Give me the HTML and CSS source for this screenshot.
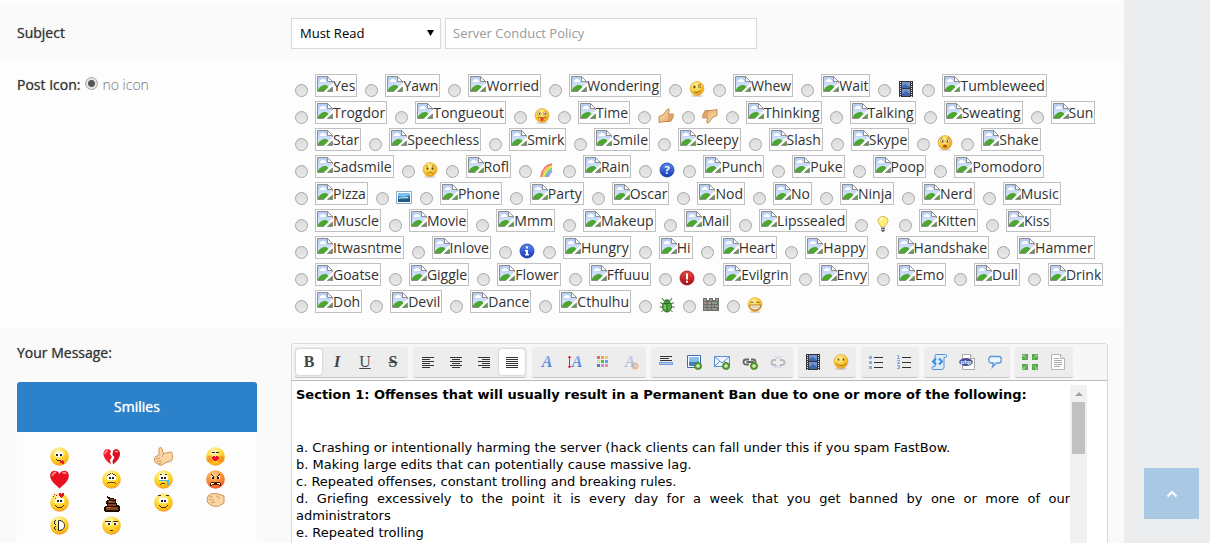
FILE: index.html
```
<!doctype html>
<html lang="en">
    <head>
        <meta charset="UTF-8" />
        <meta name="viewport" content="width=device-width, initial-scale=1.0" />
        <title>Edit Post</title>
        <link rel="stylesheet" href="styles.css">
    </head>
    <body>
        <!-- Shared icon symbols -->
        <svg class="sprite" width="0" height="0" aria-hidden="true">
            <defs>
                <radialGradient id="gFace" cx="40%" cy="30%" r="70%">
                    <stop offset="0" stop-color="#fff2a0" />
                    <stop offset=".55" stop-color="#fcd03c" />
                    <stop offset="1" stop-color="#e8a01e" />
                </radialGradient>
                <radialGradient id="gSmile" cx="42%" cy="25%" r="75%">
                    <stop offset="0" stop-color="#fff8c4" />
                    <stop offset=".5" stop-color="#ffdc3a" />
                    <stop offset=".85" stop-color="#fcb813" />
                    <stop offset="1" stop-color="#f59a3c" />
                </radialGradient>
                <radialGradient id="gAngry" cx="42%" cy="25%" r="75%">
                    <stop offset="0" stop-color="#ffd08a" />
                    <stop offset=".6" stop-color="#fb8a35" />
                    <stop offset="1" stop-color="#ee5a2a" />
                </radialGradient>
                <linearGradient id="gSky" x1="0" y1="0" x2="0" y2="1">
                    <stop offset="0" stop-color="#b3ccf5" />
                    <stop offset="1" stop-color="#e4edfc" />
                </linearGradient>
                <linearGradient id="gBlue" x1="0" y1="0" x2="0" y2="1">
                    <stop offset="0" stop-color="#5a8af0" />
                    <stop offset="1" stop-color="#1638b4" />
                </linearGradient>
                <linearGradient id="gRed" x1="0" y1="0" x2="0" y2="1">
                    <stop offset="0" stop-color="#ee4a45" />
                    <stop offset="1" stop-color="#a80c12" />
                </linearGradient>
                <linearGradient id="gLetter" x1="0" y1="0" x2="0" y2="1">
                    <stop offset="0" stop-color="#9dbdf0" />
                    <stop offset="1" stop-color="#3f74cf" />
                </linearGradient>
                <linearGradient id="gHand" x1="0" y1="0" x2="1" y2="1">
                    <stop offset="0" stop-color="#ffe3b8" />
                    <stop offset="1" stop-color="#e2a263" />
                </linearGradient>
            </defs>

            <symbol id="missing" viewBox="0 0 16 16">
                <path d="M.5.5h10l5 5v10H.5z" fill="url(#gSky)" stroke="#8e8e8e" />
                <path d="M10.500.500v5h5z" fill="#fff" stroke="#8e8e8e" />
                <path d="M3 6h5.500a1.500 1.500 0 0 0-1-2.500A2 2 0 0 0 4 4a1.200 1.200 0 0 0-1 2z" fill="#fff" />
                <path d="M1 15v-1.500C3 10 6 8.500 9 9c1.500.500 2.500 1.500 3 3v3z" fill="#4da62f" />
                <path d="M16 6.500L6.500 16H10l6-5z" fill="#fdfdfd" />
                <path d="M10.500 15.500h5V11z" fill="#4da62f" stroke="#8e8e8e" />
            </symbol>

            <symbol id="face" viewBox="0 0 16 16">
                <ellipse cx="8" cy="15" rx="6" ry="1" fill="#000" opacity=".15" />
                <circle cx="8" cy="7.500" r="7" fill="url(#gFace)" stroke="#dfa038" stroke-width=".6" />
            </symbol>
            <symbol id="wink" viewBox="0 0 16 16">
                <use href="#face" />
                <ellipse cx="5.500" cy="6" rx="1" ry="1.400" fill="#5a3a10" />
                <path d="M9 6.500c1-.800 2-.800 3 0M9 4.500l3-1M5 10.500c2 1.500 4.500 1.200 6.500-1" fill="none" stroke="#7b5218" stroke-width=".9" />
            </symbol>
            <symbol id="tongue" viewBox="0 0 16 16">
                <use href="#face" />
                <circle cx="5.200" cy="5.500" r="1.600" fill="#fff" stroke="#9a6a20" stroke-width=".6" />
                <circle cx="10.800" cy="5.500" r="1.600" fill="#fff" stroke="#9a6a20" stroke-width=".6" />
                <path d="M5 5h1v1.500H5zM10.500 5h1v1.500h-1z" fill="#402808" />
                <path d="M3.500 9.500h9" stroke="#8a5a18" stroke-width=".8" />
                <path d="M6.500 10h3v1.500a1.500 1.500 0 0 1-3 0z" fill="#e8333a" />
            </symbol>
            <symbol id="shocked" viewBox="0 0 16 16">
                <use href="#face" />
                <circle cx="5.200" cy="6" r="1.700" fill="#fff" stroke="#9a6a20" stroke-width=".6" />
                <circle cx="10.800" cy="6" r="1.700" fill="#fff" stroke="#9a6a20" stroke-width=".6" />
                <path d="M5 5.500h1V7H5zM10 5.500h1V7h-1z" fill="#402808" />
                <path d="M3 3.500l2.500-1M13 3.500l-2.500-1" stroke="#a8762a" stroke-width=".8" />
                <ellipse cx="8" cy="11" rx="2.200" ry="1.500" fill="#9a5a18" />
            </symbol>
            <symbol id="sad" viewBox="0 0 16 16">
                <use href="#face" />
                <ellipse cx="5.500" cy="6.500" rx=".9" ry="1.300" fill="#5a3a10" />
                <ellipse cx="10.500" cy="6.500" rx=".9" ry="1.300" fill="#5a3a10" />
                <path d="M3.500 4.500L6 3.500M12.500 4.500L10 3.500M5 11.500c1.500-1.800 4.500-1.800 6 0" fill="none" stroke="#9a6a20" stroke-width=".8" />
            </symbol>
            <symbol id="biggrin" viewBox="0 0 16 16">
                <use href="#face" />
                <path d="M3.500 6c.800-1.500 2-1.500 3 0M9.500 6c.800-1.500 2-1.500 3 0" fill="none" stroke="#6b4512" />
                <path d="M2.500 8h11c0 3-2.500 5-5.500 5s-5.500-2-5.500-5z" fill="#fff" stroke="#9a6416" stroke-width=".8" />
                <path d="M3 10h10M6 8.500V12M8 8.500v4M10 8.500V12" stroke="#c9a060" stroke-width=".5" />
            </symbol>
            <symbol id="happy" viewBox="0 0 16 16">
                <use href="#face" />
                <ellipse cx="5.500" cy="5.500" rx=".8" ry="1.300" fill="#6b4512" />
                <ellipse cx="10.500" cy="5.500" rx=".8" ry="1.300" fill="#6b4512" />
                <path d="M3.500 9c1.500 3.500 7.500 3.500 9 0" fill="none" stroke="#9a6a20" stroke-width=".9" />
            </symbol>
            <symbol id="thumbsup" viewBox="0 0 16 16">
                <path d="M1 8.500l5-2.500 3.500-5c1-.700 2 .300 1.700 1.500L10 6h4.500c1.500 0 1.300 2 .300 2 .700.500.500 1.800-.500 2 .500.700 0 1.700-1 1.800.300 1-.300 1.700-1.300 1.700H7l-6 1z" fill="url(#gHand)" stroke="#b87333" stroke-width=".8" />
                <path d="M10 8h4M10 10h4M9.500 12H13" stroke="#c4823f" stroke-width=".6" />
            </symbol>
            <symbol id="thumbsdown" viewBox="0 0 16 16">
                <g transform="rotate(180 8 8)"><use href="#thumbsup" /></g>
            </symbol>
            <symbol id="video" viewBox="0 0 16 16">
                <path d="M1 0h14v16H1z" fill="#333" />
                <path d="M4 1h8v6H4zM4 8h8v7H4z" fill="#6f92d0" />
                <path d="M4 5l3-2 5 3v1H4zM4 13l4-3 4 3v2H4z" fill="#4166ae" />
                <path d="M2.500 1v15M13.500 1v15" stroke="#eee" stroke-dasharray="1 1" />
            </symbol>
            <symbol id="rainbow" viewBox="0 0 16 16">
                <g fill="none" stroke-width="1.500">
                    <path d="M2 15C3 8 7 3 13 2" stroke="#f4645f" />
                    <path d="M3.400 15c1-6 4.500-10 9.600-11.600" stroke="#fba64b" />
                    <path d="M4.800 15c1-5 4-8.800 8.200-10.200" stroke="#f6ea55" />
                    <path d="M6.200 15c.800-4 3.300-7 6.800-8.800" stroke="#72d468" />
                    <path d="M7.600 15c.800-3 2.600-5.500 5.400-7.200" stroke="#5cb0f2" />
                    <path d="M9 15c.500-2.500 1.800-4 4-5.500" stroke="#b389e8" />
                </g>
            </symbol>
            <symbol id="question" viewBox="0 0 16 16">
                <circle cx="8" cy="8" r="7" fill="url(#gBlue)" stroke="#1c3aa5" stroke-width=".8" />
            </symbol>
            <symbol id="information" viewBox="0 0 16 16">
                <circle cx="8" cy="8" r="7" fill="url(#gBlue)" stroke="#1c3aa5" stroke-width=".8" />
                <path d="M7 3.500h2v2H7zM6 7h3v4h1v1.500H6V11h1V8.500H6z" fill="#fff" />
            </symbol>
            <symbol id="exclamation" viewBox="0 0 16 16">
                <circle cx="8" cy="8" r="7" fill="url(#gRed)" stroke="#9b0d10" stroke-width=".8" />
                <path d="M7 3.500h2v6H7zM7 10.800h2v2H7z" fill="#fff" />
            </symbol>
            <symbol id="photo" viewBox="0 0 16 16">
                <path d="M.5 2.500h15v12H.5z" fill="#fff" stroke="#8fa9c4" />
                <path d="M2 4h12v9H2z" fill="#2f7fc6" />
                <path d="M2 4h12v2l-6 2-6-1z" fill="#7fc0ee" />
                <path d="M2 10c4-2 8 1 12-1v4H2z" fill="#1d5a80" />
                <path d="M3 9.500c3-1.500 6 0 9-1" stroke="#e5f5ff" fill="none" />
            </symbol>
            <symbol id="lightbulb" viewBox="0 0 16 16">
                <path d="M8 .5c3 0 5 2 5 4.500 0 2.500-2.500 3.500-3 6H6c-.500-2.500-3-3.500-3-6C3 2.500 5 .5 8 .5z" fill="#ffee7a" stroke="#cda93a" stroke-width=".8" />
                <path d="M5 4c.500-1.200 1.500-2 3-2" stroke="#fffbd8" stroke-width="1.500" fill="none" />
                <path d="M6 11h4v4H6z" fill="#b9b9b9" />
                <path d="M6 12.500h4M6 14.500h4M7 15.500h2" stroke="#555" stroke-width=".8" />
            </symbol>
            <symbol id="bug" viewBox="0 0 16 16">
                <path d="M5 4L3 1M11 4l2-3M4 7L1 5.500M12 7l3-1.500M4 10H.5M12 10h3.500M5 12.500L2.500 15M11 12.500l2.500 2.500" stroke="#3a6a36" fill="none" />
                <ellipse cx="8" cy="9.500" rx="4.500" ry="5.500" fill="#55a83f" stroke="#2b6a25" />
                <path d="M5 4.500c0-3 6-3 6 0z" fill="#2f7d33" />
                <path d="M8 6v9M5 6.500h6" stroke="#2b6a25" />
                <path d="M6 8v4" stroke="#a6dd8b" />
            </symbol>
            <symbol id="brick" viewBox="0 0 16 16" shape-rendering="crispEdges">
                <path d="M0 1h4v2h2V1h4v2h2V1h4v13H0z" fill="#6d6d6d" />
                <path d="M1 2h2v2H1zM7 2h2v2H7zM13 2h2v2h-2zM5 5h3v2H5zM12 8h3v2h-3zM1 11h3v2H1z" fill="#9a9a9a" />
                <path d="M1 5h3v2H1zM9 8h2v2H9zM5 11h3v2H5z" fill="#a88a7c" />
                <path d="M9 5h5v2H9zM1 8h2v2H1zM4 8h4v2H4zM9 11h5v2H9z" fill="#8b978a" />
            </symbol>

            <!-- Smilies of the sidebar box -->
            <symbol id="s-base" viewBox="0 0 19 19">
                <circle cx="9.500" cy="9.500" r="9.300" fill="url(#gSmile)" />
            </symbol>
            <symbol id="s-eyes" viewBox="0 0 19 19">
                <path d="M6 5h7v1h1v4H5V6h1z" fill="#fff" />
                <path d="M7 7h2v2H7zM10 7h2v2h-2z" fill="#222" />
            </symbol>
            <symbol id="s-tongue" viewBox="0 0 19 19">
                <use href="#s-base" />
                <g shape-rendering="crispEdges">
                    <path d="M6 5h3v1h1V5h3v4h-3v1H6V9H5V6h1z" fill="#fff" />
                    <path d="M6 7h2v2H6zM10 7h2v2h-2z" fill="#222" />
                    <path d="M6 12h1v1H6zM7 13h4v1H7z" fill="#4a2a00" />
                    <path d="M10 14h4v3h-2v-1h-2zM12 13h1v1h-1z" fill="#ec1c24" />
                </g>
            </symbol>
            <symbol id="s-broken" viewBox="0 0 19 19">
                <path d="M9 4C7 1 1 2 1.500 7.500 2 12 6 15 9 17.500L8 13l2-3-2-3z" fill="#ee1c2c" />
                <path d="M11 4c2-3 7.500-2 7 3.500C17.500 12 14 15 11 17.500L10.500 14l2-4-2-2z" fill="#d81025" />
                <path d="M3 7c0-2 1-3 3-3M13 5c1-.800 2-.800 3 0" stroke="#ff9a9a" stroke-width="1.500" fill="none" />
            </symbol>
            <symbol id="s-thumb" viewBox="0 0 19 19">
                <path d="M5 8V2c0-2 3-2 3 0l1.500 4.500L17 5c1.500 0 1.500 2 1.500 4s0 4-1.500 5l-5 1.500L7 18.500l-5-2.500C0 14 0 9.500 2 9.500z" fill="#fbd6a4" stroke="#c98a4b" stroke-width=".9" />
                <path d="M2 12l4-1M3 14.500l4-1M5 17l3-2M9.500 6.500L8 10" stroke="#c98a4b" stroke-width=".8" fill="none" />
            </symbol>
            <symbol id="s-kiss" viewBox="0 0 19 19">
                <use href="#s-base" />
                <circle cx="4" cy="12" r="3.500" fill="#f77b22" opacity=".6" />
                <circle cx="15" cy="12" r="3.500" fill="#f77b22" opacity=".6" />
                <g shape-rendering="crispEdges">
                    <path d="M6 5h3v1H6zM10 5h3v1h-3z" fill="#222" />
                    <path d="M7 9h2v1h1V9h2v1h1v2h-1v1h-1v1H8v-1H7v-1H6v-2h1z" fill="#ea0f2a" />
                </g>
            </symbol>
            <symbol id="s-heart" viewBox="0 0 19 19">
                <path d="M9.500 4C7.500-.5 0-.5.200 6c.300 5.500 6 9 9.300 12.500C13 15 18.700 11.500 18.800 6 19-.5 11.500-.5 9.500 4z" fill="#e8101e" />
                <path d="M2.500 6c0-2.500 1.500-3.500 3.500-3.500M12.500 3c2-.800 3 0 3.500.8" stroke="#ff8f8f" stroke-width="1.800" fill="none" />
            </symbol>
            <symbol id="s-sad" viewBox="0 0 19 19">
                <use href="#s-base" />
                <g shape-rendering="crispEdges">
                    <use href="#s-eyes" />
                    <path d="M5 5h1v1H5zM6 4h2v1H6zM8 3h1v1H8zM13 5h1v1h-1zM11 4h2v1h-2zM10 3h1v1h-1zM5 13h1v1H5zM6 12h7v1H6zM13 13h1v1h-1z" fill="#6b4200" />
                </g>
            </symbol>
            <symbol id="s-cry" viewBox="0 0 19 19">
                <use href="#s-base" />
                <g shape-rendering="crispEdges">
                    <use href="#s-eyes" />
                    <path d="M5 10h8v1H5zM13 10h2v5h-2z" fill="#4ab8f0" />
                    <path d="M6 4h2v1H6zM11 4h2v1h-2zM6 14h1v1H6zM7 13h4v1H7z" fill="#6b4200" />
                </g>
            </symbol>
            <symbol id="s-angry" viewBox="0 0 19 19">
                <circle cx="9.500" cy="9.500" r="9.300" fill="url(#gAngry)" />
                <g shape-rendering="crispEdges">
                    <path d="M5 6h3v3H5zM11 6h3v3h-3z" fill="#fff" />
                    <path d="M5 4h1v1H5zM6 5h1v1H6zM7 6h1v3H6V7h1zM13 4h1v1h-1zM12 5h1v1h-1zM11 6h1v1h1v2h-2z" fill="#3a1500" />
                    <path d="M5 12h9v1h1v3h-2v-1H6v1H4v-3h1z" fill="#4a1a00" />
                    <path d="M5 13h3v1H5zM11 13h3v1h-3zM5 14h1v1H5zM13 14h1v1h-1z" fill="#fff" />
                </g>
            </symbol>
            <symbol id="s-love" viewBox="0 0 19 19">
                <use href="#s-base" />
                <g shape-rendering="crispEdges">
                    <use href="#s-eyes" />
                    <path d="M5 12h1v1H5zM6 13h1v1H6zM7 14h5v1H7zM12 13h1v1h-1zM13 12h1v1h-1z" fill="#5a3200" />
                    <path d="M9 0h2v1h1V0h2v3h-1v1h-1v1h-1V4h-1V3H9zM4 1h1v1H4zM6 2h1v1H6zM3 3h1v1H3zM5 5h1v1H5z" fill="#dd1020" />
                </g>
            </symbol>
            <symbol id="s-poop" viewBox="0 0 19 19" shape-rendering="crispEdges">
                <path d="M5 3h1v1h2v1h4v1h2v4h1v2h2v1h1v5h-1v1H3v-1H2v-4h1v-1h2v-2H4V8h1V7h2V6H6V5H5z" fill="#1d0b04" />
                <path d="M8 6h5v1H8zM6 8h7v2H6zM6 11h8v2H6zM4 14h12v3H4z" fill="#8a4325" />
                <path d="M7 8h3v1H7zM5 14h4v1H5z" fill="#bb6d48" />
            </symbol>
            <symbol id="s-smile" viewBox="0 0 19 19">
                <use href="#s-base" />
                <g shape-rendering="crispEdges">
                    <use href="#s-eyes" />
                    <path d="M4 2h3v1H4zM12 2h3v1h-3zM5 12h1v1H5zM6 13h1v1H6zM7 14h5v1H7zM12 13h1v1h-1zM13 12h1v1h-1z" fill="#5a3200" />
                </g>
            </symbol>
            <symbol id="s-fist" viewBox="0 0 19 19">
                <path d="M3 2C6-.2 10 0 12 1l6 2v7l-5 3c-4 1-8 0-11-3C.5 7 1 4 3 2z" fill="#fbd6a4" stroke="#c98a4b" stroke-width=".9" />
                <path d="M3 4c2-1 3-1 4 1M3 7c2-1 3-1 5 1M5 10c1-1 3-1 4 0M10 3c2 0 3 1 3 3" stroke="#c98a4b" stroke-width=".8" fill="none" />
            </symbol>
            <symbol id="s-side" viewBox="0 0 19 19">
                <use href="#s-base" />
                <path d="M8.500 4.500c4 0 6 2 6 5s-2 5-6 5z" fill="#fff" stroke="#222" />
                <path d="M5 4h1v1H5zM4 5h1v3H4zM5 8h1v1H5zM5 10h1v1H5zM4 11h1v2H4zM5 13h1v1H5z" fill="#222" shape-rendering="crispEdges" />
            </symbol>
            <symbol id="s-flat" viewBox="0 0 19 19">
                <use href="#s-base" />
                <g shape-rendering="crispEdges">
                    <path d="M4 6h5v3H4zM11 6h5v3h-5z" fill="#fff" />
                    <path d="M3 5h6v1H3zM11 5h5v1h-5zM6 7h2v2H6zM12 7h2v2h-2zM8 14h3v1H8z" fill="#4a2a00" />
                </g>
            </symbol>

            <!-- Editor toolbar -->
            <symbol id="plus" viewBox="0 0 16 16">
                <circle cx="12" cy="12" r="3.500" fill="#5da32c" stroke="#3d7a18" stroke-width=".8" />
                <path d="M12 10v4M10 12h4" stroke="#fff" />
            </symbol>
            <symbol id="t-left" viewBox="0 0 16 16"><path d="M2 3.500h12M2 5.500h8M2 7.500h12M2 9.500h8M2 11.500h12M2 13.500h8" stroke="#333" /></symbol>
            <symbol id="t-center" viewBox="0 0 16 16"><path d="M2 3.500h12M4 5.500h8M2 7.500h12M4 9.500h8M2 11.500h12M4 13.500h8" stroke="#333" /></symbol>
            <symbol id="t-right" viewBox="0 0 16 16"><path d="M2 3.500h12M6 5.500h8M2 7.500h12M6 9.500h8M2 11.500h12M6 13.500h8" stroke="#333" /></symbol>
            <symbol id="t-justify" viewBox="0 0 16 16"><path d="M2 3.500h12M2 5.500h12M2 7.500h12M2 9.500h12M2 11.500h12M2 13.500h12" stroke="#333" /></symbol>
            <symbol id="t-size" viewBox="0 0 16 16">
                <path d="M2.500 2v12M1 4l1.500-2L4 4M1 12l1.500 2L4 12" stroke="#e0262c" fill="none" />
            </symbol>
            <symbol id="t-color" viewBox="0 0 16 16">
                <path d="M2 2h3v3H2z" fill="#ef6a5e" /><path d="M6 2h3v3H6z" fill="#f6a04d" /><path d="M10 2h3v3h-3z" fill="#f7c86a" />
                <path d="M2 6h3v3H2z" fill="#c5e6a5" /><path d="M6 6h3v3H6z" fill="#51b95a" /><path d="M10 6h3v3h-3z" fill="#56a8e8" />
                <path d="M2 10h3v3H2z" fill="#5b78c8" /><path d="M6 10h3v3H6z" fill="#cf86d6" /><path d="M10 10h3v3h-3z" fill="#f48aa8" />
            </symbol>
            <symbol id="t-clear" viewBox="0 0 16 16">
                <circle cx="12" cy="12" r="3.500" fill="#f27a35" />
                <path d="M10 12h4" stroke="#fff" />
            </symbol>
            <symbol id="t-rule" viewBox="0 0 16 16">
                <path d="M2 2.500h12M2 4.500h9M2 6.500h12" stroke="#333" />
                <path d="M1.500 8.500h13v2h-13z" fill="#b5d0f5" stroke="#6c99da" />
            </symbol>
            <symbol id="t-image" viewBox="0 0 16 16">
                <path d="M1.500 1.500h13v12h-13z" fill="#fff" stroke="#3d6ea8" />
                <path d="M3 3h10v9H3z" fill="#8cc0ea" />
                <path d="M3 8c4-1 6 1 10-1v5H3z" fill="#3b84be" />
                <use href="#plus" />
            </symbol>
            <symbol id="t-mail" viewBox="0 0 16 16">
                <path d="M.5 2.500h15v10H.5z" fill="#eef5ff" stroke="#5b8fd4" />
                <path d="M1 3l7 6 7-6M1 12l5-5M15 12l-5-5" stroke="#5b8fd4" fill="none" />
                <use href="#plus" />
            </symbol>
            <symbol id="t-link" viewBox="0 0 16 16">
                <path d="M7 5.500H4a2.500 2.500 0 0 0 0 5h3M9 5.500h2a2.500 2.500 0 0 1 0 5H9M4.500 8h7" stroke="#666" stroke-width="1.800" fill="none" />
                <use href="#plus" />
            </symbol>
            <symbol id="t-unlink" viewBox="0 0 16 16">
                <path d="M6 6H4a2.500 2.500 0 0 0 0 5h2M10 6h2a2.500 2.500 0 0 1 0 5h-2" stroke="#bbb" stroke-width="2" fill="none" />
                <path d="M5 2l2 3M11 2L9 5M5 14l2-3M11 14l-2-3M8 2v2M8 12v2" stroke="#b5cdee" fill="none" />
            </symbol>
            <symbol id="t-bullets" viewBox="0 0 16 16">
                <path d="M1 2h3v3H1zM1 7h3v3H1zM1 12h3v3H1z" fill="#86aee8" />
                <path d="M6 3.500h9M6 8.500h9M6 13.500h9" stroke="#333" />
            </symbol>
            <symbol id="t-numbers" viewBox="0 0 16 16">
                <path d="M1 1.500h1.500V4M1 4.500h3M1 6.500h2.500V8L1 9.500h3M1 11.500h2.500v3H1M2 13h1.500" stroke="#7ba6e4" fill="none" />
                <path d="M6 3.500h9M6 8.500h9M6 13.500h9" stroke="#333" />
            </symbol>
            <symbol id="t-code" viewBox="0 0 16 16">
                <path d="M4.500.5h10c1.500 0 1.500 3 0 3H13v9c0 2-1 3-2 3H2c-1.500 0-1.500-3 0-3h2V2z" fill="#dcecfb" stroke="#5b93d0" />
                <path d="M5 4.500L2 7.500l3 3M8 4.500l3 3-3 3" stroke="#2f8fe0" stroke-width="2" fill="none" />
            </symbol>
            <symbol id="t-php" viewBox="0 0 16 16">
                <path d="M3.500.5h8l4 4v11h-12z" fill="#fff" stroke="#aaa" />
                <path d="M11.500.5v4h4" stroke="#aaa" fill="#eee" />
                <ellipse cx="7" cy="8" rx="6.800" ry="4" fill="#4d4b96" />
            </symbol>
            <symbol id="t-quote" viewBox="0 0 16 16">
                <path d="M4 2.500h8c3 0 3 6.500 0 6.500H9.500L5.500 13l1-4H4c-3 0-3-6.500 0-6.500z" fill="#eef6ff" stroke="#5e97d6" stroke-width="1.300" />
            </symbol>
            <symbol id="t-max" viewBox="0 0 16 16">
                <path d="M0 0h6v6H0zM10 0h6v6h-6zM0 10h6v6H0zM10 10h6v6h-6z" fill="#58a84e" />
                <path d="M1.500 1.500l3 3M14.500 1.500l-3 3M1.500 14.500l3-3M14.500 14.500l-3-3M1 3V1h2M13 1h2v2M1 13v2h2M15 13v2h-2" stroke="#b5e0a8" fill="none" stroke-width=".8" />
            </symbol>
            <symbol id="t-source" viewBox="0 0 16 16">
                <path d="M1.500.5h9l4 4v11h-13z" fill="#fff" stroke="#b5b5b5" />
                <path d="M10.500.5v4h4" fill="#eee" stroke="#b5b5b5" />
                <path d="M4 4.500h5M4 6.500h8M4 8.500h8M4 10.500h8M4 12.500h6" stroke="#aaa" />
            </symbol>
        </svg>

        <form class="page">
            <div class="row subject-row">
                <label class="row-label" for="subject">Subject</label>
                <div class="subject-fields">
                    <select class="prefix" aria-label="Thread prefix">
                        <option>Must Read</option>
                    </select>
                    <input class="subject" id="subject" type="text" placeholder="Server Conduct Policy" />
                </div>
            </div>

            <div class="row icon-row">
                <div class="row-label">
                    Post Icon:
                    <label class="no-icon"><input class="radio" type="radio" name="icon" checked /> no icon</label>
                </div>
                <div class="post-icons" id="postIcons"></div>
            </div>

            <div class="row message-row">
                <div class="message-side">
                    <div class="row-label">Your Message:</div>
                    <div class="smilies">
                        <h2 class="smilies-title">Smilies</h2>
                        <div class="smilies-list" id="smilies"></div>
                    </div>
                </div>

                <div class="editor">
                    <div class="toolbar" id="toolbar"></div>
                    <div class="editor-body">
                        <div class="editor-text">
                            <p class="section-title">Section 1: Offenses that will usually result in a Permanent Ban due to one or more of the following:</p>
                            <p>a. Crashing or intentionally harming the server (hack clients can fall under this if you spam FastBow.</p>
                            <p>b. Making large edits that can potentially cause massive lag.</p>
                            <p>c. Repeated offenses, constant trolling and breaking rules.</p>
                            <p>d. Griefing excessively to the point it is every day for a week that you get banned by one or more of our administrators</p>
                            <p>e. Repeated trolling</p>
                        </div>
                        <div class="scrollbar">
                            <div class="scroll-arrow"></div>
                            <div class="scroll-thumb"></div>
                        </div>
                    </div>
                </div>
            </div>
        </form>

        <a class="to-top" href="#" aria-label="Back to top">
            <svg width="12" height="8" viewBox="0 0 12 8"><path d="M1.500 6.500L6 2l4.500 4.500" fill="none" stroke="#fff" stroke-width="2" /></svg>
        </a>

        <script>
            // Names starting with "#" have their own picture, the rest show alt text
            const postIcons = `
                Yes Yawn Worried Wondering #wink Whew Wait #video Tumbleweed
                Trogdor Tongueout #tongue Time #thumbsup #thumbsdown Thinking Talking Sweating Sun
                Star Speechless Smirk Smile Sleepy Slash Skype #shocked Shake
                Sadsmile #sad Rofl #rainbow Rain #question Punch Puke Poop Pomodoro
                Pizza #photo Phone Party Oscar Nod No Ninja Nerd Music
                Muscle Movie Mmm Makeup Mail Lipssealed #lightbulb Kitten Kiss
                Itwasntme Inlove #information Hungry Hi Heart Happy Handshake Hammer
                Goatse Giggle Flower Fffuuu #exclamation Evilgrin Envy Emo Dull Drink
                Doh Devil Dance Cthulhu #bug #brick #biggrin
            `.trim().split(/\s+/);

            const smilies = [
                "tongue", "broken", "thumb", "kiss",
                "heart", "sad", "cry", "angry",
                "love", "poop", "smile", "fist",
                "side", "flat",
            ];

            const toolbar = [
                ["bold", "italic", "underline", "strike"],
                ["t-left", "t-center", "t-right", "t-justify"],
                ["t-font", "t-size", "t-color", "t-clear"],
                ["t-rule", "t-image", "t-mail", "t-link", "t-unlink"],
                ["video", "happy"],
                ["t-bullets", "t-numbers"],
                ["t-code", "t-php", "t-quote"],
                ["t-max", "t-source"],
            ];
            const letters = { bold: "B", italic: "I", underline: "U", strike: "S" };
            const active = ["bold", "t-justify"];

            // Characters drawn on top of some icons
            const iconText = {
                question: '<text x="8" y="12" class="badge-text">?</text>',
                "t-font": '<text x="8" y="13" class="letter">A</text>',
                "t-size": '<text x="10" y="13" class="letter">A</text>',
                "t-clear": '<text x="7" y="13" class="letter">A</text>',
                "t-php": '<text x="7" y="10" class="php-text">php</text>',
            };

            function icon(id, size) {
                return `<svg width="${size}" height="${size}"><use href="#${id}" />${iconText[id] || ""}</svg>`;
            }

            document.getElementById("postIcons").innerHTML = postIcons
                .map((name) => {
                    const own = name.startsWith("#");
                    const label = name.replace("#", "");
                    const picture = own
                        ? icon(label, 16)
                        : `<span class="missing">${icon("missing", 16)}${label}</span>`;
                    return `<label class="icon-option"><input class="radio" type="radio" name="icon" value="${label}" aria-label="${label}" />${picture}</label>`;
                })
                .join("");

            document.getElementById("smilies").innerHTML = smilies
                .map((name) => `<button class="smiley" type="button" aria-label="${name}">${icon("s-" + name, 19)}</button>`)
                .join("");

            document.getElementById("toolbar").innerHTML = toolbar
                .map((group) => {
                    const buttons = group.map((id) => {
                        const state = active.includes(id) ? " active" : "";
                        const content = letters[id] || icon(id, 16);
                        return `<button class="tool ${id}${state}" type="button" aria-label="${id.replace("t-", "")}">${content}</button>`;
                    });
                    return `<div class="tool-group">${buttons.join("")}</div>`;
                })
                .join("");
        </script>
    </body>
</html>
```

FILE: styles.css
```
* {
    margin: 0;
    padding: 0;
    box-sizing: border-box;
}

body {
    background: #ecedef;
    color: #333;
    font-family: "Open Sans", sans-serif;
    font-size: 14px;
}

button {
    border: 0;
    background: none;
    cursor: pointer;
}

svg {
    display: block;
    flex: none;
}

.sprite {
    position: absolute;
}

.page {
    display: flex;
    flex-direction: column;
    min-height: 100vh;
    margin-right: 86px;
    padding-top: 3px;
    background: #fdfdfd;
}

.row {
    display: grid;
    grid-template-columns: 274px 1fr;
    padding: 0 16px 0 17px;
}

.row-label {
    color: #333;
    line-height: 20px;
    text-shadow: 0 0 1px #777;
}

/* Subject */
.subject-row {
    align-items: center;
    height: 57px;
    padding-top: 3px;
    background: #fafafa;
}

.subject-fields {
    display: flex;
    gap: 4px;
}

.prefix,
.subject {
    height: 31px;
    border: 1px solid #d8d8d8;
    background: #fff;
    font-family: "Open Sans", sans-serif;
    font-size: 13px;
}

.prefix {
    width: 150px;
    padding: 0 8px;
    appearance: none;
    background-image: url("data:image/svg+xml,%3Csvg xmlns='http://www.w3.org/2000/svg' width='7' height='6'%3E%3Cpath d='M0 0h7L3.500 6z'/%3E%3C/svg%3E");
    background-position: right 6px center;
    background-repeat: no-repeat;
    color: #000;
}

.subject {
    width: 312px;
    padding: 0 7px;
}

.subject::placeholder {
    color: #999;
}

/* Post icons */
.icon-row {
    padding-top: 14px;
    padding-bottom: 16px;
}

.icon-row .row-label {
    display: flex;
    align-items: flex-start;
    gap: 5px;
    padding-top: 1px;
}

.no-icon {
    display: flex;
    gap: 4px;
    color: #777;
    font-weight: 300;
    text-shadow: none;
}

.radio {
    flex: none;
    width: 13px;
    height: 13px;
    border: 1px solid #a5a5a5;
    border-radius: 50%;
    appearance: none;
    background: linear-gradient(#dcdcdc, #e9e9e9);
}

.radio:checked {
    margin-top: 2px;
    background: radial-gradient(circle, #555 3px, #e4e4e4 4px);
}

.post-icons {
    display: flex;
    flex-wrap: wrap;
    gap: 4px 8px;
    padding-left: 4px;
}

.icon-option {
    display: flex;
    align-items: flex-end;
    gap: 7px;
    height: 23px;
}

.missing {
    display: flex;
    height: 23px;
    padding: 1px;
    border: 1px solid silver;
    line-height: 19px;
}

.badge-text {
    fill: #fff;
    font-family: "Open Sans", sans-serif;
    font-size: 11px;
    font-weight: 700;
    text-anchor: middle;
}

/* Message */
.message-row {
    flex: 1;
    padding-top: 14px;
    background: #fafafa;
}

.message-side {
    display: flex;
    flex-direction: column;
}

.smilies {
    flex: 1;
    width: 240px;
    margin-top: 19px;
    border-radius: 3px 3px 0 0;
    background: #fdfdfd;
    overflow: hidden;
}

.smilies-title {
    background: #2b82ca;
    color: #fff;
    font-size: 14px;
    font-weight: 400;
    line-height: 50px;
    text-align: center;
    text-shadow: 0 0 1px #fff;
}

.smilies-list {
    display: grid;
    grid-template-columns: repeat(4, 1fr);
    row-gap: 4px;
    padding: 15px 16px 0;
}

.smiley {
    display: flex;
    justify-content: center;
}

/* Editor */
.editor {
    display: flex;
    flex-direction: column;
    min-width: 0;
    border: 1px solid #d9d9d9;
    border-bottom: 0;
    border-radius: 4px 4px 0 0;
    background: #fff;
}

.toolbar {
    display: flex;
    gap: 5px;
    padding: 3px 2px 2px;
    border-bottom: 1px solid #bbb;
    border-radius: 4px 4px 0 0;
    background: #f7f7f7;
}

.tool-group {
    display: flex;
    gap: 2px;
    padding: 2px;
    border-bottom: 1px solid #c4c4c4;
    border-radius: 3px;
    background: #ededed;
}

.tool {
    display: flex;
    align-items: center;
    justify-content: center;
    width: 26px;
    height: 26px;
    border-radius: 3px;
    color: #444;
    font-family: "Liberation Serif", serif;
    font-size: 16px;
}

.tool.active {
    background: #fff;
    box-shadow: 0 0 2px #aaa;
}

.bold {
    font-weight: 700;
}

.italic {
    font-style: italic;
    font-weight: 700;
}

.underline {
    text-decoration: underline;
}

.strike {
    font-weight: 700;
    text-decoration: line-through;
}

.t-clear svg {
    opacity: .45;
}

.letter {
    fill: url(#gLetter);
    font-family: "Liberation Serif", serif;
    font-size: 16px;
    font-style: italic;
    font-weight: 700;
    text-anchor: middle;
}

.php-text {
    fill: #fff;
    font-family: "Liberation Sans", sans-serif;
    font-size: 6px;
    font-weight: 700;
    text-anchor: middle;
}

.editor-body {
    display: flex;
    flex: 1;
    margin-right: 20px;
    padding: 4px 0 0 4px;
}

.editor-text {
    flex: 1;
    min-width: 0;
    padding-top: 1px;
    color: #000;
    font-family: "DejaVu Sans", Verdana, sans-serif;
    font-size: 13px;
    line-height: 17px;
    text-align: justify;
}

.section-title {
    margin-bottom: 36px;
    font-weight: 700;
}

.scrollbar {
    display: flex;
    flex-direction: column;
    align-items: center;
    width: 17px;
    background: #f1f1f1;
}

.scroll-arrow {
    margin: 7px 0 6px;
    border: 4px solid transparent;
    border-top: 0;
    border-bottom-color: #a3a3a3;
}

.scroll-thumb {
    width: 13px;
    height: 52px;
    background: #c1c1c1;
}

/* Back to top */
.to-top {
    position: fixed;
    right: 11px;
    bottom: 24px;
    display: flex;
    align-items: center;
    justify-content: center;
    width: 55px;
    height: 51px;
    background: #a9c8e4;
}
```
